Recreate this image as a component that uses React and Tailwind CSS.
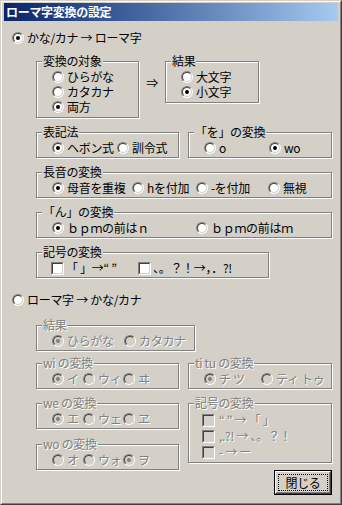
import React from 'react'

const dis = 'text-[#808080] [text-shadow:1px_1px_0_#fff]'

const Radio = ({ checked, disabled }) => (
  <span className="w-3 h-3 shrink-0 flex rounded-full border border-[#808080] border-r-white border-b-white">
    <span className={`flex-1 flex items-center justify-center rounded-full border border-[#404040] border-r-[#d4d0c8] border-b-[#d4d0c8] ${disabled ? 'bg-[#d4d0c8]' : 'bg-white'}`}>
      {checked && <span className={`w-1 h-1 rounded-full ${disabled ? 'bg-[#808080]' : 'bg-black'}`} />}
    </span>
  </span>
)

const Check = ({ disabled }) => (
  <span className="w-[13px] h-[13px] shrink-0 flex border border-[#808080] border-r-white border-b-white">
    <span className={`flex-1 border border-[#404040] border-r-[#d4d0c8] border-b-[#d4d0c8] ${disabled ? 'bg-[#d4d0c8]' : 'bg-white'}`} />
  </span>
)

const Opt = ({ w = '', h = 'h-4 leading-4', checked, disabled, children }) => (
  <div className={`flex items-center gap-[3px] whitespace-nowrap ${h} ${w}`}>
    <Radio checked={checked} disabled={disabled} />
    <span className={disabled ? dis : ''}>{children}</span>
  </div>
)

const Group = ({ title, disabled, className = '', children }) => (
  <div className={`relative shrink-0 border border-[#808080] shadow-[1px_1px_0_#fff,inset_1px_1px_0_#fff] ${className}`}>
    <span className={`absolute left-[5px] top-[-8px] px-px leading-[14px] bg-[#d4d0c8] whitespace-nowrap ${disabled ? dis : ''}`}>
      {title}
    </span>
    {children}
  </div>
)

const Row = 'h-[26px] pt-[7px] pl-[15px] flex items-start'
const Short = 'h-[15px] leading-[15px]'

export default function App() {
  return (
    <div className="w-[342px] h-[505px] bg-[#d4d0c8] border border-[#d4d0c8] border-r-[#404040] border-b-[#404040] text-[12px] leading-4 tracking-[-0.3px] text-black font-['Noto_Sans_CJK_JP','Liberation_Sans',sans-serif]">
      <div className="h-full flex flex-col border border-white border-r-[#808080] border-b-[#808080] pt-px px-[2px] pb-[2px]">
        <div className="h-[18px] shrink-0 flex items-center pl-[2px] bg-linear-to-r from-[#0a246a] to-[#a6caf0] text-white font-bold">
          ローマ字変換の設定
        </div>

        <div className="flex flex-col">
          <div className="mt-[9px] ml-[8px]">
            <Opt checked>かな/カナ → ローマ字</Opt>
          </div>

          <div className="mt-[15px] ml-[32px] flex items-start">
            <Group title="変換の対象" className="w-[103px] h-[57px] pt-[7px] pl-[15px] flex flex-col">
              <Opt h={Short}>ひらがな</Opt>
              <Opt h={Short}>カタカナ</Opt>
              <Opt h={Short} checked>両方</Opt>
            </Group>
            <span className="w-[26px] mt-[14px] text-center">⇒</span>
            <Group title="結果" className="w-[94px] h-[42px] pt-[7px] pl-[15px] flex flex-col">
              <Opt h={Short}>大文字</Opt>
              <Opt h={Short} checked>小文字</Opt>
            </Group>
          </div>

          <div className="mt-[14px] ml-[32px] flex gap-[9px]">
            <Group title="表記法" className={`w-[143px] ${Row}`}>
              <Opt w="w-[65px]" checked>ヘボン式</Opt>
              <Opt>訓令式</Opt>
            </Group>
            <Group title="「を」の変換" className={`w-[144px] ${Row}`}>
              <Opt w="w-[65px]">o</Opt>
              <Opt checked>wo</Opt>
            </Group>
          </div>

          <Group title="長音の変換" className={`mt-[14px] ml-[32px] w-[296px] ${Row}`}>
            <Opt w="w-[80px]" checked>母音を重複</Opt>
            <Opt w="w-[64px]">hを付加</Opt>
            <Opt w="w-[72px]">-を付加</Opt>
            <Opt>無視</Opt>
          </Group>

          <Group title="「ん」の変換" className={`mt-[14px] ml-[32px] w-[296px] ${Row}`}>
            <Opt w="w-[144px]" checked>ｂｐｍの前はｎ</Opt>
            <Opt>ｂｐｍの前はｍ</Opt>
          </Group>

          <Group title="記号の変換" className="mt-[14px] ml-[32px] w-[233px] h-[26px] pt-[7px] pl-[14px] flex items-start">
            <div className="w-[87px] h-4 flex items-center gap-[2px] whitespace-nowrap">
              <Check />
              <span>「 」→“ ”</span>
            </div>
            <div className="h-4 flex items-center gap-[2px] whitespace-nowrap">
              <Check />
              <span>、。？！→，．?!</span>
            </div>
          </Group>

          <div className="mt-[14px] ml-[8px]">
            <Opt>ローマ字 → かな/カナ</Opt>
          </div>

          <Group title="結果" disabled className={`mt-[17px] ml-[32px] w-[159px] ${Row}`}>
            <Opt w="w-[72px]" checked disabled>ひらがな</Opt>
            <Opt disabled>カタカナ</Opt>
          </Group>

          <div className="mt-[12px] ml-[32px] flex gap-[9px]">
            <Group title="wi の変換" disabled className={`w-[143px] ${Row}`}>
              <Opt w="w-[31px]" checked disabled>イ</Opt>
              <Opt w="w-[40px]" disabled>ウィ</Opt>
              <Opt disabled>ヰ</Opt>
            </Group>
            <Group title="ti tu の変換" disabled className={`w-[144px] ${Row}`}>
              <Opt w="w-[57px]" checked disabled>チ ツ</Opt>
              <Opt disabled>ティ トゥ</Opt>
            </Group>
          </div>

          <div className="mt-[14px] ml-[32px] flex gap-[9px]">
            <div className="w-[143px] flex flex-col">
              <Group title="we の変換" disabled className={Row}>
                <Opt w="w-[31px]" checked disabled>エ</Opt>
                <Opt w="w-[40px]" disabled>ウェ</Opt>
                <Opt disabled>ヱ</Opt>
              </Group>
              <Group title="wo の変換" disabled className={`mt-[15px] ${Row}`}>
                <Opt w="w-[31px]" disabled>オ</Opt>
                <Opt w="w-[40px]" disabled>ウォ</Opt>
                <Opt checked disabled>ヲ</Opt>
              </Group>
            </div>
            <div className="w-[144px] flex flex-col">
              <Group title="記号の変換" disabled className="h-[60px] pt-[8px] pl-[13px] flex flex-col">
                <div className="h-4 flex items-center gap-[4px] whitespace-nowrap">
                  <Check disabled />
                  <span className={dis}>“ ” → 「 」</span>
                </div>
                <div className="h-4 flex items-center gap-[4px] whitespace-nowrap">
                  <Check disabled />
                  <span className={dis}>,.?! → 、。？！</span>
                </div>
                <div className="h-4 flex items-center gap-[4px] whitespace-nowrap">
                  <Check disabled />
                  <span className={dis}>- → ー</span>
                </div>
              </Group>
              <button className="mt-[7px] self-end w-[58px] h-[25px] flex border border-black bg-[#d4d0c8] p-0">
                <span className="flex-1 flex border border-white border-r-[#404040] border-b-[#404040]">
                  <span className="flex-1 flex border border-[#d4d0c8] border-r-[#808080] border-b-[#808080] p-px">
                    <span className="flex-1 flex items-center justify-center border border-dotted border-black leading-none">
                      閉じる
                    </span>
                  </span>
                </span>
              </button>
            </div>
          </div>
        </div>
      </div>
    </div>
  )
}
